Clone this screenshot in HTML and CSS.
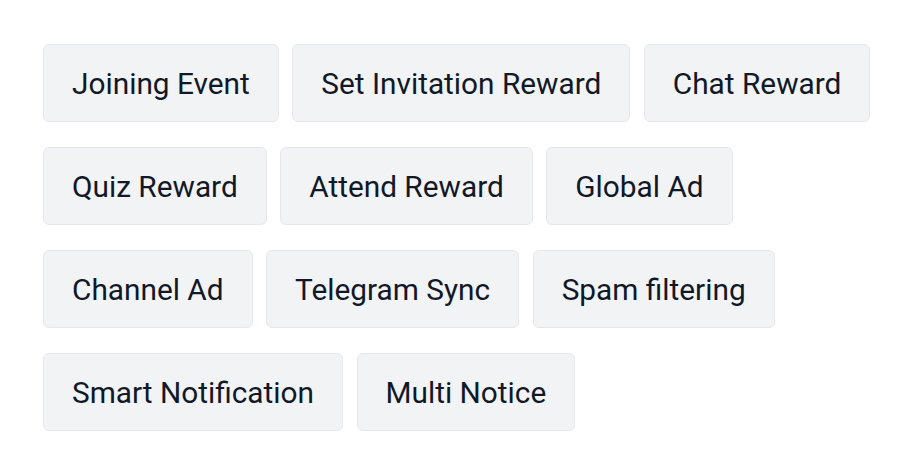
FILE: index.html
```html
<!DOCTYPE html>
<html>
<head>
<meta charset="utf-8">
<link rel="stylesheet" href="styles.css">
</head>
<body>
<div class="tags">
  <span class="tag">Joining Event</span>
  <span class="tag">Set Invitation Reward</span>
  <span class="tag">Chat Reward</span>
  <span class="tag">Quiz Reward</span>
  <span class="tag">Attend Reward</span>
  <span class="tag">Global Ad</span>
  <span class="tag">Channel Ad</span>
  <span class="tag">Telegram Sync</span>
  <span class="tag">Spam filtering</span>
  <span class="tag">Smart Notification</span>
  <span class="tag">Multi Notice</span>
</div>
</body>
</html>
```

FILE: styles.css
```css
html, body {
  margin: 0;
  padding: 0;
  background: #ffffff;
}
.tags {
  display: flex;
  flex-wrap: wrap;
  column-gap: 13.5px;
  row-gap: 25px;
  padding: 44px 40px 0 43px;
  width: 840px;
}
.tag {
  display: inline-block;
  font-family: Roboto, "Liberation Sans", sans-serif;
  font-size: 29.8px;
  line-height: 36px;
  color: #111827;
  background: #f2f3f5;
  border: 1px solid #e5e7eb;
  border-radius: 6px;
  padding: 21px 28px 19px;
}
```
